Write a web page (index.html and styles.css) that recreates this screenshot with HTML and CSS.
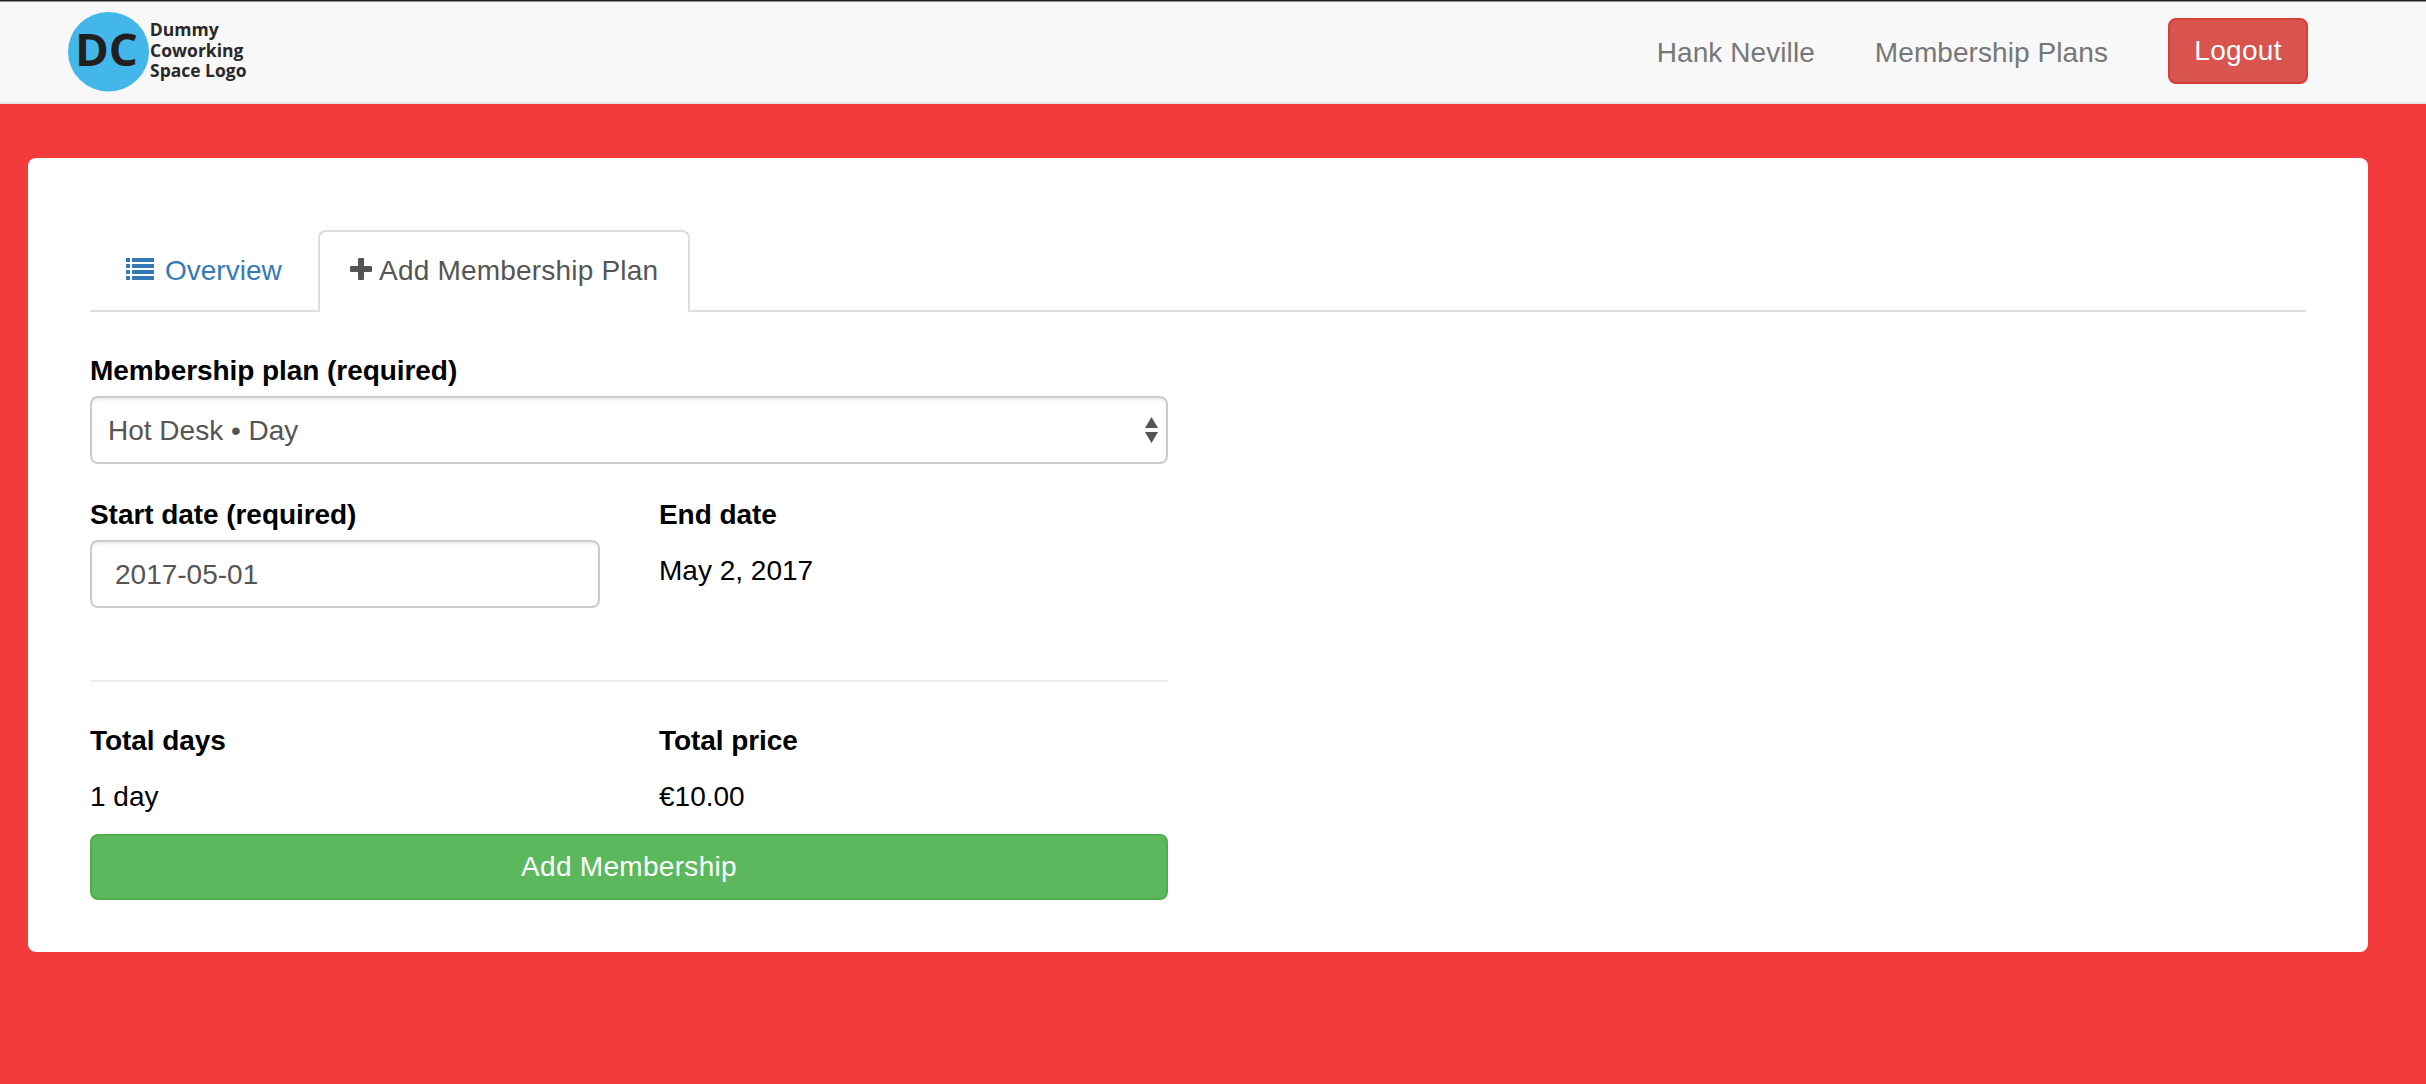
FILE: index.html
```html
<!DOCTYPE html>
<html lang="en">
<head>
<meta charset="utf-8">
<title>Add Membership Plan</title>
<link rel="stylesheet" href="styles.css">
</head>
<body>
<header class="navbar">
  <a class="brand">
    <svg class="brand-logo" width="200" height="84" viewBox="0 0 200 84" role="img" aria-label="Dummy Coworking Space Logo">
      <ellipse class="logo-disc" cx="40.5" cy="41.7" rx="40.5" ry="39.8"/>
      <text class="logo-initials" x="7" y="56" textLength="63" lengthAdjust="spacingAndGlyphs">DC</text>
      <text class="logo-name" x="81.7" y="26" textLength="69" lengthAdjust="spacingAndGlyphs">Dummy</text>
      <text class="logo-name" x="82" y="47" textLength="93.5" lengthAdjust="spacingAndGlyphs">Coworking</text>
      <text class="logo-name" x="82" y="67" textLength="96.5" lengthAdjust="spacingAndGlyphs">Space Logo</text>
    </svg>
  </a>
  <nav class="nav-links">
    <a class="nav-link">Hank Neville</a>
    <a class="nav-link">Membership Plans</a>
    <button class="btn btn-danger">Logout</button>
  </nav>
</header>
<main class="card">
  <ul class="tabs">
    <li class="tab">
      <svg class="icon icon-list" width="28" height="22" viewBox="0 0 28 22" aria-hidden="true">
        <path d="M0 0h4v4H0zM6 0h22v4H6zM0 6h4v4H0zM6 6h22v4H6zM0 12h4v4H0zM6 12h22v4H6zM0 18h4v4H0zM6 18h22v4H6z"/>
      </svg>
      <span>Overview</span>
    </li>
    <li class="tab tab-active">
      <svg class="icon icon-plus" width="22" height="22" viewBox="0 0 22 22" aria-hidden="true">
        <path d="M9 0h4q1 0 1 1v7h7q1 0 1 1v4q0 1-1 1h-7v7q0 1-1 1H9q-1 0-1-1v-7H1q-1 0-1-1V9q0-1 1-1h7V1q0-1 1-1z"/>
      </svg>
      <span>Add Membership Plan</span>
    </li>
  </ul>
  <form class="form">
    <div class="field">
      <label class="label">Membership plan (required)</label>
      <div class="control select">
        <span>Hot Desk • Day</span>
        <svg width="13" height="26" viewBox="0 0 13 26" aria-hidden="true">
          <path d="M6.5 0L13 11H0zM0 15h13L6.5 26z"/>
        </svg>
      </div>
    </div>
    <div class="columns dates">
      <div class="field">
        <label class="label">Start date (required)</label>
        <div class="control">2017-05-01</div>
      </div>
      <div class="field">
        <span class="label">End date</span>
        <span class="value">May 2, 2017</span>
      </div>
    </div>
    <hr class="divider">
    <div class="columns totals">
      <div class="field">
        <span class="label">Total days</span>
        <span class="value">1 day</span>
      </div>
      <div class="field">
        <span class="label">Total price</span>
        <span class="value">€10.00</span>
      </div>
    </div>
    <button class="btn btn-success" type="button">Add Membership</button>
  </form>
</main>
</body>
</html>
```
FILE: styles.css
```css
* {
  box-sizing: border-box;
}

body {
  margin: 0;
  min-height: 1084px;
  background: #f23b3a;
  color: #000;
  font: 28px/40px "Liberation Sans", Arial, sans-serif;
}

.navbar {
  display: flex;
  justify-content: space-between;
  align-items: flex-start;
  height: 104px;
  padding: 8px 118px 0 68px;
  background: linear-gradient(#252325 1px, #8e8d8e 1px, #8e8d8e 2px, #f8f8f8 2px);
  border-bottom: 2px solid #e7e7e7;
}

.brand-logo {
  display: block;
  margin-top: 2px;
}

.logo-disc {
  fill: #43b6ea;
}

.logo-initials,
.logo-name {
  font-family: "Open Sans", sans-serif;
  font-weight: 700;
  fill: #231f20;
}

.logo-initials {
  font-size: 44px;
}

.logo-name {
  font-size: 18px;
  fill: #2b2829;
}

.nav-links {
  display: flex;
  align-items: flex-start;
  gap: 60px;
  padding-top: 10px;
}

.nav-link {
  margin-top: 15px;
  color: #777;
  letter-spacing: 0.08px;
}

.btn {
  height: 66px;
  padding: 11px 20px;
  border: 2px solid;
  border-radius: 8px;
  color: #fff;
  font: inherit;
  letter-spacing: 0.3px;
}

.btn-danger {
  width: 140px;
  background: #d9534f;
  border-color: #d43f3a;
}

.btn-success {
  width: 100%;
  background: #5cb85c;
  border-color: #4cae4c;
}

.card {
  width: 2340px;
  height: 794px;
  margin: 54px 0 0 28px;
  padding: 72px 62px 0;
  background: #fff;
  border-radius: 8px;
}

.tabs {
  display: flex;
  height: 82px;
  margin: 0;
  padding: 0;
  border-bottom: 2px solid #ddd;
  list-style: none;
}

.tab {
  display: flex;
  align-items: flex-start;
  height: 82px;
  padding: 19px 20px 0 34px;
  border: 2px solid transparent;
  border-bottom: 0;
  color: #337ab7;
}

.tab:first-child {
  width: 228px;
}

.tab-active {
  width: 372px;
  padding-left: 30px;
  background: #fff;
  border-color: #ddd;
  border-radius: 8px 8px 0 0;
  color: #555;
}

.icon {
  flex: none;
  margin-top: 7px;
  fill: currentColor;
}

.icon-list {
  margin-right: 11px;
}

.icon-plus {
  margin-right: 7px;
}

.tab span {
  white-space: nowrap;
}

.tab-active span {
  letter-spacing: 0.2px;
}

.form {
  width: 1078px;
  padding-top: 39px;
}

.field {
  display: flex;
  flex-direction: column;
}

.label {
  font-weight: 700;
  letter-spacing: -0.06px;
}

.control {
  height: 68px;
  margin-top: 5px;
  padding: 13px 23px 0;
  border: 2px solid #ccc;
  border-radius: 8px;
  background: #fff;
  box-shadow: inset 0 2px 2px rgba(0, 0, 0, 0.075);
  color: #555;
}

.select {
  display: flex;
  justify-content: space-between;
  padding: 13px 8px 0 16px;
}

.select svg {
  margin-top: 6px;
  fill: #555;
}

.columns {
  display: grid;
  grid-template-columns: 510px 509px;
  column-gap: 59px;
}

.dates {
  padding-top: 31px;
}

.value {
  margin-top: 16px;
}

.divider {
  height: 2px;
  margin: 72px 0 39px;
  border: 0;
  background: #eee;
}

.totals {
  padding-bottom: 17px;
}
```
